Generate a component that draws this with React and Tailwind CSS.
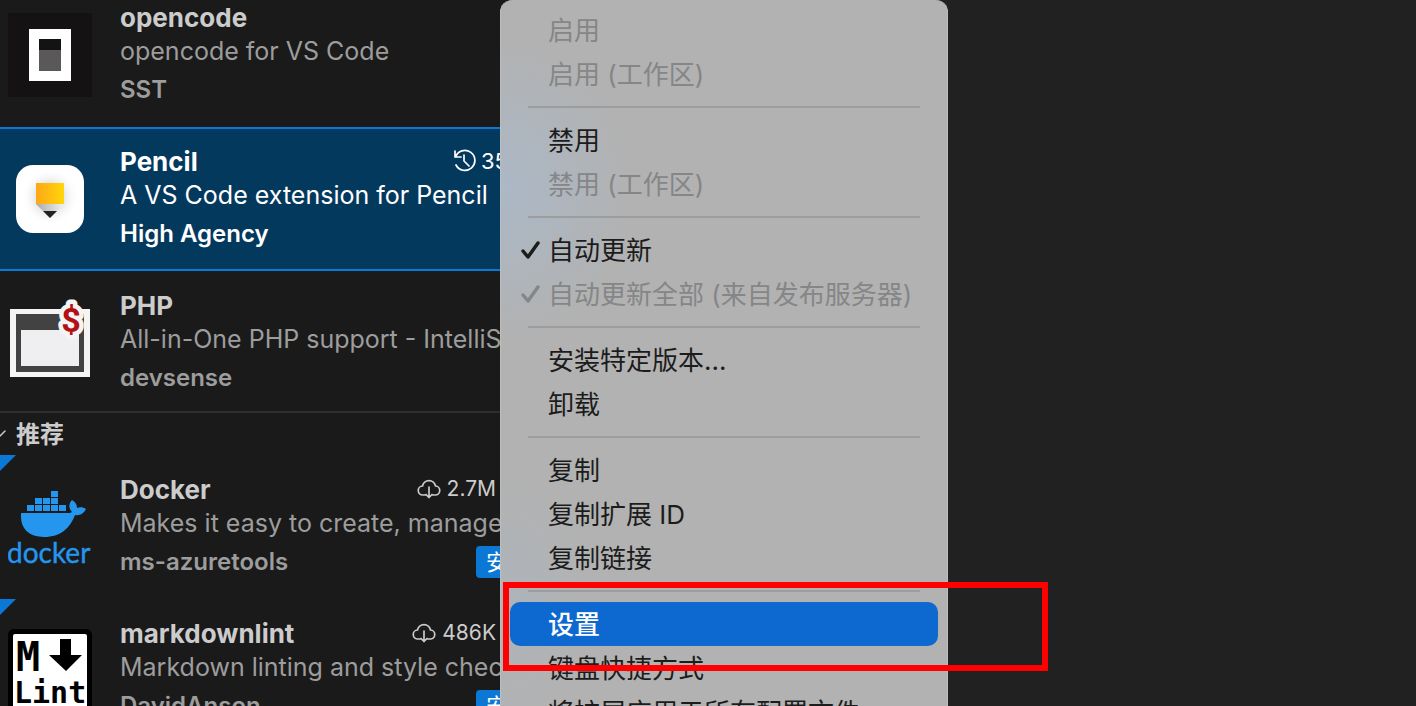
import clsx from "clsx";

// Icons
function OpencodeIcon() {
    return (
        <svg viewBox="0 0 84 84" className="w-21 h-21 shrink-0">
            <rect width="84" height="84" fill="#141213" />
            <rect x="21" y="16" width="42" height="52" fill="#fff" />
            <rect x="31" y="26" width="22" height="11" fill="#141213" />
            <rect x="31" y="37" width="22" height="21" fill="#5a5858" />
        </svg>
    );
}

function PencilIcon() {
    return (
        <svg viewBox="0 0 84 84" className="w-21 h-21 shrink-0">
            <defs>
                <linearGradient id="pencil-body" x1="0" x2="1">
                    <stop offset="0" stopColor="#ffa716" />
                    <stop offset="1" stopColor="#ffd60a" />
                </linearGradient>
                <linearGradient id="pencil-wood" x1="0" x2="1">
                    <stop offset="0" stopColor="#aaa" />
                    <stop offset="1" stopColor="#f2f2f2" />
                </linearGradient>
                <radialGradient id="pencil-shade">
                    <stop offset="0.3" stopColor="#d2d2d2" />
                    <stop offset="1" stopColor="#fff" stopOpacity="0" />
                </radialGradient>
            </defs>
            <rect x="8" y="8" width="68" height="68" rx="17" fill="#fff" />
            <circle cx="42" cy="40" r="29" fill="url(#pencil-shade)" />
            <path d="M28 47h28L42 61z" fill="url(#pencil-wood)" />
            <path d="M35 54h14l-7 7z" fill="#222" />
            <rect x="28" y="26" width="28" height="21" fill="url(#pencil-body)" />
        </svg>
    );
}

function PhpIcon() {
    return (
        <svg viewBox="0 0 84 84" className="w-21 h-21 shrink-0 overflow-visible">
            <rect x="2" y="8" width="80" height="68" fill="#f4f4f4" />
            <rect x="8" y="13" width="68" height="58" fill="#424242" />
            <rect x="13" y="29" width="58" height="36" fill="#efeff1" />
            <text
                x="63"
                y="31"
                textAnchor="middle"
                stroke="#f4f4f4"
                strokeWidth="9"
                strokeLinejoin="round"
                paintOrder="stroke"
                fill="#b30f14"
                className="font-['Roboto'] font-bold text-[34px]"
            >
                $
            </text>
        </svg>
    );
}

function DockerIcon() {
    const boxes = [
        [43, 6],
        [27, 13], [35, 13], [43, 13],
        [19, 20], [27, 20], [35, 20], [43, 20], [51, 20],
    ];
    return (
        <svg viewBox="0 0 84 84" className="w-21 h-21 shrink-0" fill="#2496ed">
            {boxes.map(([x, y]) => (
                <rect key={`${x}-${y}`} x={x} y={y} width="7" height="6" />
            ))}
            <path d="M14 28h44c3 0 5 0 6-1-4-4-3-9 0-12 3 2 5 4 5 8 3-1 6-1 9 1-2 4-6 7-11 6C62 43 53 52 36 52 20 52 12 43 13 29c0-1 0-1 1-1z" />
            <text x="-1" y="78" stroke="#2496ed" strokeWidth="0.4" className="font-['Lato'] text-[28px]">
                docker
            </text>
        </svg>
    );
}

function MarkdownlintIcon() {
    return (
        <svg viewBox="0 0 84 84" className="w-21 h-21 shrink-0">
            <rect width="84" height="84" rx="6" fill="#000" />
            <rect x="5" y="5" width="74" height="74" rx="2" fill="#fff" />
            <path d="M52 10h11v16h11L58 42 41 26h11z" />
            <text x="8" y="42" className="font-['DejaVu_Sans_Mono'] font-bold text-[40px]">
                M
            </text>
            <text x="6" y="74" className="font-['DejaVu_Sans_Mono'] font-bold text-[30px]">
                Lint
            </text>
        </svg>
    );
}

const lineIcon = {
    viewBox: "0 0 24 24",
    fill: "none",
    stroke: "currentColor",
    strokeLinecap: "round",
    strokeLinejoin: "round",
};

function HistoryIcon() {
    return (
        <svg {...lineIcon} strokeWidth="1.7" className="w-6 h-6">
            <path d="M2 2v6h6M2.5 8A10 10 0 1 1 3 16M11 6v6l5 5" />
        </svg>
    );
}

function CloudIcon() {
    return (
        <svg {...lineIcon} strokeWidth="1.7" className="w-6 h-6">
            <path d="M9 18H6a4.5 4.5 0 0 1-.5-9 6.6 6.6 0 0 1 13 0 4.5 4.5 0 0 1-.5 9h-3M12 10v10.500M9 17.500l3 3 3-3" />
        </svg>
    );
}

function CheckIcon() {
    return (
        <svg {...lineIcon} viewBox="0 0 20 20" strokeWidth="3.5" className="w-5 h-5">
            <path d="M3 11l5 6L18 3" />
        </svg>
    );
}

const installed = [
    {
        name: "opencode",
        description: "opencode for VS Code",
        publisher: "SST",
        icon: OpencodeIcon,
    },
    {
        name: "Pencil",
        description: "A VS Code extension for Pencil",
        publisher: "High Agency",
        icon: PencilIcon,
        updated: "35",
        selected: true,
    },
    {
        name: "PHP",
        description: "All-in-One PHP support - IntelliSense",
        publisher: "devsense",
        icon: PhpIcon,
    },
];

const recommended = [
    {
        name: "Docker",
        description: "Makes it easy to create, manage",
        publisher: "ms-azuretools",
        icon: DockerIcon,
        installs: "2.7M",
    },
    {
        name: "markdownlint",
        description: "Markdown linting and style checking",
        publisher: "DavidAnson",
        icon: MarkdownlintIcon,
        installs: "486K",
    },
];

const menuGroups = [
    [
        { title: "启用", disabled: true },
        { title: "启用 (工作区)", disabled: true },
    ],
    [{ title: "禁用" }, { title: "禁用 (工作区)", disabled: true }],
    [
        { title: "自动更新", checked: true },
        { title: "自动更新全部 (来自发布服务器)", checked: true, disabled: true },
    ],
    [{ title: "安装特定版本..." }, { title: "卸载" }],
    [{ title: "复制" }, { title: "复制扩展 ID" }, { title: "复制链接" }],
    [
        { title: "设置", active: true },
        { title: "键盘快捷方式" },
        { title: "将扩展应用于所有配置文件" },
    ],
];

function ExtensionRow({ item }) {
    const Icon = item.icon;
    return (
        <li
            className={clsx(
                "relative flex h-36 shrink-0 items-center gap-7 pl-2 whitespace-nowrap",
                item.selected
                    ? "bg-[#04395e] text-white border-y-2 border-[#0a78d4]"
                    : "text-[#9d9d9d]"
            )}
        >
            {/* recommendation ribbon */}
            {item.installs && (
                <svg viewBox="0 0 16 16" className="absolute left-0 top-0 w-4 h-4" fill="#0a78d4">
                    <path d="M0 0h16L0 16z" />
                </svg>
            )}
            <Icon />
            <div className="min-w-0 flex-1">
                <div className="flex h-9 items-center justify-between">
                    <h3 className={clsx("text-[26px] font-bold", !item.selected && "text-[#cccccc]")}>
                        {item.name}
                    </h3>
                    {item.updated && (
                        <span className="flex items-center gap-1 text-[22px]">
                            <HistoryIcon />
                            {item.updated}
                        </span>
                    )}
                    {item.installs && (
                        <span className="flex items-center gap-1.5 pr-3 text-[21px] text-[#cccccc]">
                            <CloudIcon />
                            {item.installs}
                        </span>
                    )}
                </div>
                <p className="h-8 overflow-hidden text-[25px] leading-8">{item.description}</p>
                <div className="flex h-11 items-center justify-between pt-0.5">
                    <span className="text-[24px] font-semibold">{item.publisher}</span>
                    {item.installs && (
                        <button className="-mr-8 h-8 rounded-sm bg-[#0a78d4] px-2.5 text-[22px] leading-8 text-white">
                            安装
                        </button>
                    )}
                </div>
            </div>
        </li>
    );
}

function ContextMenu() {
    return (
        <div
            role="menu"
            className="absolute left-[500px] top-0 w-112 rounded-t-xl border-x border-[#bdbdbd] px-[9px] pt-2 bg-[#b2b2b2] bg-[radial-gradient(ellipse_130px_150px_at_0px_190px,#abb8c6,#b2b2b200),radial-gradient(ellipse_90px_130px_at_0px_600px,#aeb4ba,#b2b2b200)] text-[26px]"
        >
            {menuGroups.map((group, index) => (
                <div key={index}>
                    {index > 0 && (
                        <div role="separator" className="mx-[18px] my-2.5 h-0.5 bg-[#9c9d9e]" />
                    )}
                    {group.map((entry) => (
                        <button
                            key={entry.title}
                            role="menuitem"
                            disabled={entry.disabled}
                            className={clsx(
                                "flex h-11 w-full items-center gap-2 rounded-[10px] pl-2.5 whitespace-nowrap",
                                entry.active && "bg-[#0d69d0] font-medium text-white",
                                entry.disabled && "text-[#858687]",
                                !entry.active && !entry.disabled && "text-[#1c1c1c]"
                            )}
                        >
                            <span className="w-5 shrink-0">{entry.checked && <CheckIcon />}</span>
                            {entry.title}
                        </button>
                    ))}
                </div>
            ))}
        </div>
    );
}

export default function App() {
    return (
        <div className="relative flex h-screen w-full overflow-hidden bg-[#212121] font-['Inter','Noto_Sans_CJK_SC',sans-serif]">
            <aside className="w-[508px] shrink-0 overflow-hidden bg-[#1a1a1a]">
                <div className="h-[411px] overflow-hidden">
                    <ul className="-mt-[17px]">
                        {installed.map((item) => (
                            <ExtensionRow key={item.name} item={item} />
                        ))}
                    </ul>
                </div>
                <h2 className="-ml-2.5 flex h-11 items-center gap-2.5 border-t-2 border-[#2e2e2e] pt-0.5 text-2xl font-bold text-[#cccccc]">
                    <svg {...lineIcon} viewBox="0 0 16 16" strokeWidth="1.5" className="w-4 h-4">
                        <path d="m1 4 7 7 7-7" />
                    </svg>
                    推荐
                </h2>
                <ul>
                    {recommended.map((item) => (
                        <ExtensionRow key={item.name} item={item} />
                    ))}
                </ul>
            </aside>

            <main className="flex-1" />

            <ContextMenu />

            {/* highlight frame */}
            <div className="pointer-events-none absolute left-[503px] top-[582px] h-[89px] w-[545px] border-6 border-[#ff0000]" />
        </div>
    );
}
